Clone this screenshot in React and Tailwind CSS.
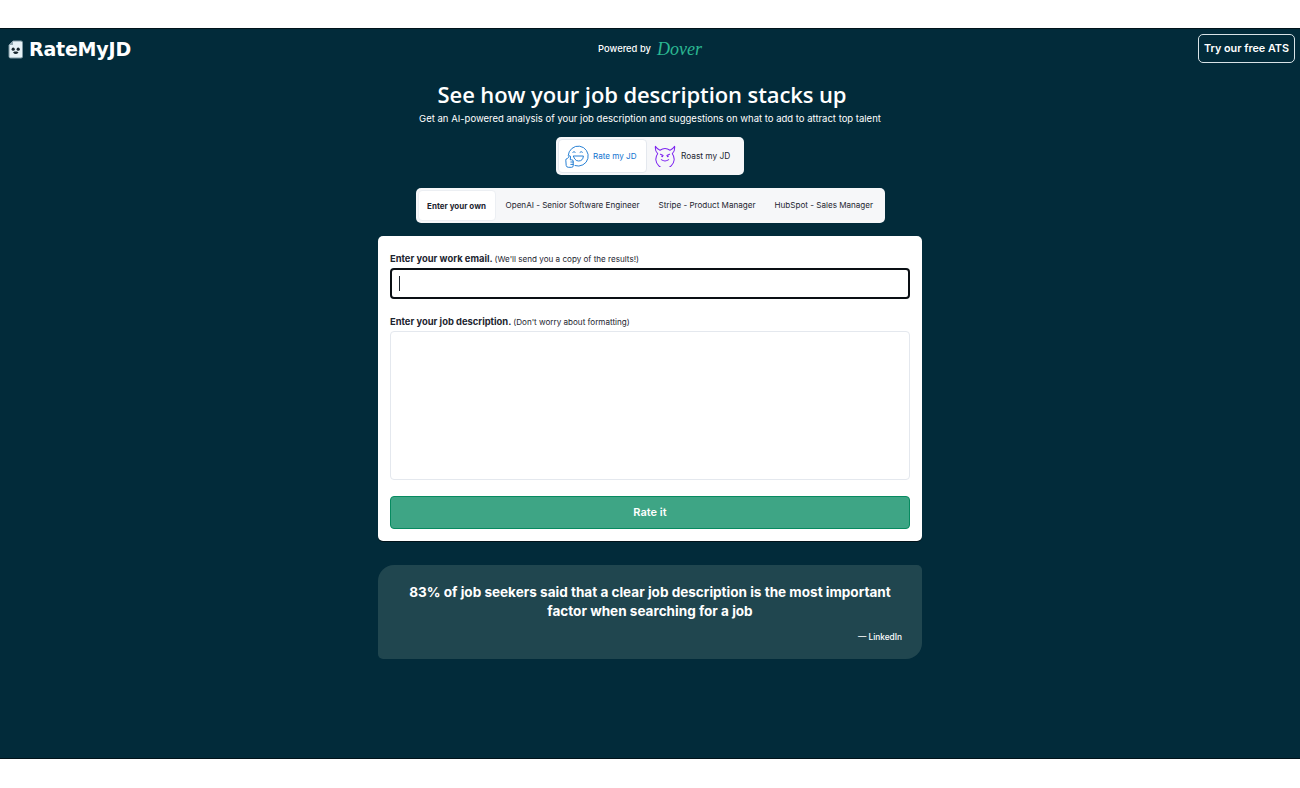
function LogoIcon() {
  return (
    <svg width="15" height="19" viewBox="0 0 15 19" className="shrink-0">
      <path d="M5 1 H13 Q14.5 1 14.5 2.5 V16.5 Q14.5 18 13 18 H2.5 Q1 18 1 16.5 V5 Z" fill="#e6f1f6" stroke="#7f98a3" strokeWidth="1" />
      <path d="M5 1 V5 H1 Z" fill="#8fa6b0" />
      <circle cx="5.2" cy="9.2" r="1.6" fill="#17262d" />
      <circle cx="10.2" cy="9.2" r="1.6" fill="#17262d" />
      <path d="M5 12.5 Q7.7 15.5 10.5 12.5 L9 11.5 H6.5 Z" fill="#17262d" />
    </svg>
  );
}

function SmileThumb() {
  return (
    <svg width="24" height="24" viewBox="0 0 24 24" fill="none" stroke="#1173cf" strokeWidth="0.9" strokeLinecap="round" strokeLinejoin="round" className="shrink-0">
      <path d="M3.2 11.5 A10 10 0 1 1 10 21.6" />
      <path d="M7.8 8.2 Q9 6.9 10.2 8.2" />
      <path d="M15 8.2 Q16.2 6.9 17.4 8.2" />
      <path d="M8.6 12 H18.4 Q18 17 13.5 17 Q11 17 9.9 15.2 Z" />
      <path d="M2 14.5 Q0.6 14.7 0.8 16.2 L1.2 21.5 Q1.5 23.3 3.3 23.3 H6.6 Q8.3 23.3 8.2 21.7 L8.2 17.2 Q8.2 15.8 6.7 15.8 H5.3 L5.5 13 Q5.5 11.6 4.4 11.8 Q3.6 12 3.6 13 Z" fill="white" />
      <path d="M8.2 18 H5.8 M8.2 20.4 H5.8" />
    </svg>
  );
}

function Devil() {
  return (
    <svg width="22" height="22" viewBox="0 0 24 24" fill="none" stroke="#7c22f0" strokeWidth="1.1" strokeLinecap="round" strokeLinejoin="round" className="shrink-0">
      <path d="M1.5 1.5 Q1 7 4 9.5 A10 10 0 1 0 20 9.5 Q23 7 22.5 1.5 Q20 5 17.5 5.7 A10 10 0 0 0 6.5 5.7 Q4 5 1.5 1.5 Z" />
      <path d="M7 10 L10 11.3 M17 10 L14 11.3" />
      <circle cx="9" cy="12.2" r="0.5" fill="#7c22f0" />
      <circle cx="15" cy="12.2" r="0.5" fill="#7c22f0" />
      <path d="M8 16 Q12 19 16 16" />
    </svg>
  );
}

export default function App() {
  return (
    <div className="h-[788px] w-[1300px] bg-white overflow-hidden flex flex-col font-['Inter',sans-serif]">
      <div className="h-[28px] shrink-0" />
      <div className="h-[731px] shrink-0 bg-[#022b3a] border-t border-b border-[#01131a] flex flex-col items-center">
        <header className="w-full h-[40px] shrink-0 relative flex items-center justify-center">
          <div className="absolute left-[8px] top-[10px] flex items-center gap-[6px]">
            <LogoIcon />
            <span className="font-['DejaVu_Sans',sans-serif] font-bold text-[19px] leading-[20px] text-white tracking-[-0.2px]">RateMyJD</span>
          </div>
          <div className="flex items-center gap-[6px]">
            <span className="text-[9.4px] text-white font-medium">Powered by</span>
            <span className="font-['Liberation_Serif',serif] italic text-[18px] leading-[20px] text-[#2bb892]">Dover</span>
          </div>
          <button className="absolute right-[5px] top-[5px] w-[97px] h-[29px] pt-[1px] rounded-[5px] border border-[#d8e2e6] text-white text-[10.8px] font-semibold flex items-center justify-center whitespace-nowrap">Try our free ATS</button>
        </header>

        <h1 className="mt-[11px] mr-[16px] text-white text-[22px] leading-[28px] font-semibold tracking-[-0.1px] font-['Open_Sans',sans-serif] whitespace-nowrap">See how your job description stacks up</h1>
        <p className="mt-[3px] text-white text-[9.5px] leading-[16px] whitespace-nowrap">Get an AI-powered analysis of your job description and suggestions on what to add to attract top talent</p>

        <div className="mt-[10px] w-[188px] h-[38px] bg-[#f6f7f9] rounded-[5px] p-[2px] flex items-stretch shrink-0">
          <div className="w-[89px] bg-white rounded-[4px] border border-[#e4e8ee] flex items-center gap-[4px] pl-[6px]">
            <SmileThumb />
            <span className="text-[8.1px] text-[#1173cf] whitespace-nowrap">Rate my JD</span>
          </div>
          <div className="flex items-center gap-[5px] pl-[7px]">
            <Devil />
            <span className="text-[8.3px] text-[#1d2530] whitespace-nowrap">Roast my JD</span>
          </div>
        </div>

        <div className="mt-[13px] w-[469px] h-[35px] bg-[#f6f7f9] rounded-[5px] p-[2px] flex items-stretch text-[8.1px] text-[#1d2530] whitespace-nowrap shrink-0">
          <div className="w-[78px] bg-white rounded-[4px] border border-[#eceff3] flex items-center justify-center font-bold text-[8px]">Enter your own</div>
          <div className="flex items-center ml-[10px]">OpenAI - Senior Software Engineer</div>
          <div className="flex items-center ml-[19px]">Stripe - Product Manager</div>
          <div className="flex items-center ml-[19px]">HubSpot - Sales Manager</div>
        </div>

        <div className="mt-[13px] w-[544px] h-[305px] bg-white rounded-[5px] shadow-[0_1px_0_#01131a] px-[12px] pt-[16px] shrink-0">
          <div className="text-[9.4px] leading-[14px] text-[#1d2530] font-bold whitespace-nowrap">
            Enter your work email. <span className="text-[8.1px] font-normal">(We'll send you a copy of the results!)</span>
          </div>
          <div className="mt-[2px] h-[31px] rounded-[4px] border-2 border-[#0a0f14] flex items-center pl-[7px]">
            <div className="w-[1px] h-[15px] bg-[#1d2530]" />
          </div>
          <div className="mt-[16px] text-[9.4px] leading-[14px] text-[#1d2530] font-bold whitespace-nowrap">
            Enter your job description. <span className="text-[8.1px] font-normal">(Don't worry about formatting)</span>
          </div>
          <div className="mt-[2px] h-[149px] rounded-[4px] border border-[#e4e8ee]" />
          <button className="mt-[16px] w-full h-[33px] rounded-[4px] bg-[#3ea585] border border-[#078a60] text-white text-[11px] font-semibold">Rate it</button>
        </div>

        <div className="mt-[24px] w-[544px] h-[94px] bg-[#20464f] rounded-tl-[16px] rounded-br-[16px] rounded-tr-[5px] rounded-bl-[5px] shrink-0 pl-[24px] pr-[20px] pt-[18px] flex flex-col">
          <p className="text-white text-[13.55px] leading-[19px] font-bold text-center pr-[4px] whitespace-nowrap">83% of job seekers said that a clear job description is the most important<br />factor when searching for a job</p>
          <p className="mt-[10px] text-white text-[8.3px] leading-[12px] font-medium text-right">— LinkedIn</p>
        </div>
      </div>
    </div>
  );
}
